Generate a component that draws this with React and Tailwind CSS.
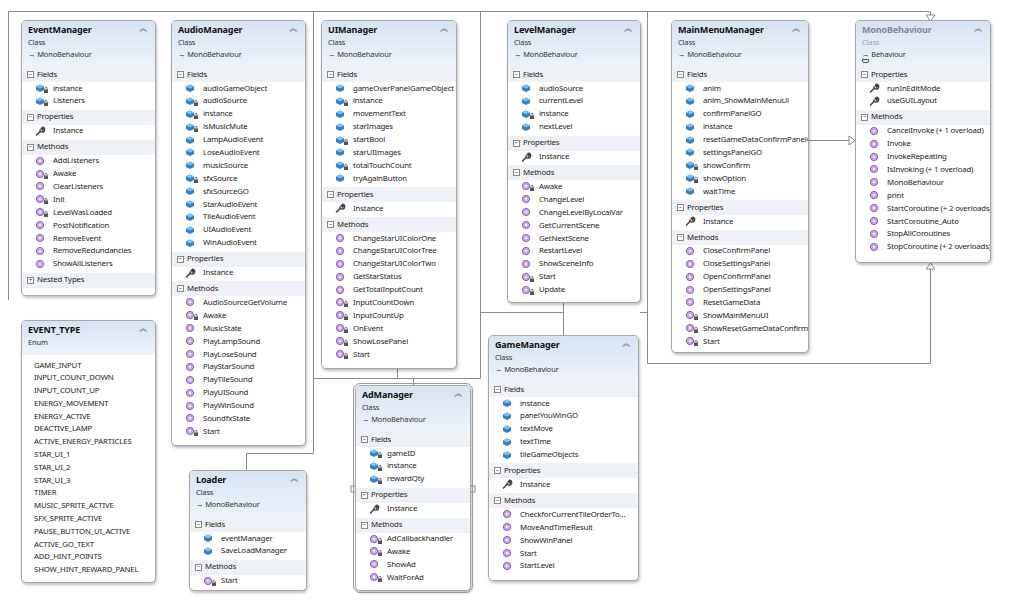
import React from 'react';

const F = 'f', FP = 'fp', P = 'p', M = 'm', MP = 'mp';

// diagram nodes: x, y, w, h and their sections
const boxes = [
  { name: 'EventManager', x: 21, y: 20, w: 135, h: 276, sub: 'Class', base: 'MonoBehaviour', nested: true,
    sections: [
      ['Fields', [[FP, 'instance'], [FP, 'Listeners']]],
      ['Properties', [[P, 'Instance']]],
      ['Methods', [[M, 'AddListeners'], [MP, 'Awake'], [M, 'ClearListeners'], [MP, 'Init'], [MP, 'LevelWasLoaded'], [M, 'PostNotification'], [M, 'RemoveEvent'], [M, 'RemoveRedundancies'], [M, 'ShowAllListeners']]],
    ] },
  { name: 'AudioManager', x: 171, y: 20, w: 135, h: 426, sub: 'Class', base: 'MonoBehaviour',
    sections: [
      ['Fields', [[F, 'audioGameObject'], [FP, 'audioSource'], [FP, 'instance'], [FP, 'isMusicMute'], [F, 'LampAudioEvent'], [F, 'LoseAudioEvent'], [F, 'musicSource'], [FP, 'sfxSource'], [F, 'sfxSourceGO'], [F, 'StarAudioEvent'], [F, 'TileAudioEvent'], [F, 'UIAudioEvent'], [F, 'WinAudioEvent']]],
      ['Properties', [[P, 'Instance']]],
      ['Methods', [[M, 'AudioSourceGetVolume'], [MP, 'Awake'], [M, 'MusicState'], [M, 'PlayLampSound'], [M, 'PlayLoseSound'], [M, 'PlayStarSound'], [M, 'PlayTileSound'], [M, 'PlayUISound'], [M, 'PlayWinSound'], [M, 'SoundfxState'], [MP, 'Start']]],
    ] },
  { name: 'UIManager', x: 321, y: 20, w: 136, h: 349, sub: 'Class', base: 'MonoBehaviour',
    sections: [
      ['Fields', [[F, 'gameOverPanelGameObject'], [FP, 'instance'], [F, 'movementText'], [F, 'starImages'], [FP, 'startBool'], [F, 'starUIImages'], [FP, 'totalTouchCount'], [F, 'tryAgainButton']]],
      ['Properties', [[P, 'Instance']]],
      ['Methods', [[M, 'ChangeStarUIColorOne'], [M, 'ChangeStarUIColorTree'], [M, 'ChangeStarUIColorTwo'], [M, 'GetStarStatus'], [M, 'GetTotalInputCount'], [MP, 'InputCountDown'], [MP, 'InputCountUp'], [MP, 'OnEvent'], [MP, 'ShowLosePanel'], [MP, 'Start']]],
    ] },
  { name: 'LevelManager', x: 507, y: 20, w: 134, h: 283, sub: 'Class', base: 'MonoBehaviour',
    sections: [
      ['Fields', [[F, 'audioSource'], [F, 'currentLevel'], [FP, 'instance'], [F, 'nextLevel']]],
      ['Properties', [[P, 'Instance']]],
      ['Methods', [[MP, 'Awake'], [M, 'ChangeLevel'], [M, 'ChangeLevelByLocalVar'], [M, 'GetCurrentScene'], [M, 'GetNextScene'], [M, 'RestartLevel'], [M, 'ShowSceneInfo'], [MP, 'Start'], [MP, 'Update']]],
    ] },
  { name: 'MainMenuManager', x: 671, y: 20, w: 138, h: 333, sub: 'Class', base: 'MonoBehaviour',
    sections: [
      ['Fields', [[F, 'anim'], [F, 'anim_ShowMainMenuUi'], [F, 'confirmPanelGO'], [F, 'instance'], [F, 'resetGameDataConfirmPanelGO'], [F, 'settingsPanelGO'], [FP, 'showConfirm'], [FP, 'showOption'], [F, 'waitTime']]],
      ['Properties', [[P, 'Instance']]],
      ['Methods', [[M, 'CloseConfirmPanel'], [M, 'CloseSettingsPanel'], [M, 'OpenConfirmPanel'], [M, 'OpenSettingsPanel'], [M, 'ResetGameData'], [MP, 'ShowMainMenuUI'], [MP, 'ShowResetGameDataConfirmPanel'], [MP, 'Start']]],
    ] },
  { name: 'MonoBehaviour', x: 855, y: 20, w: 136, h: 243, sub: 'Class', base: 'Behaviour', faded: true,
    sections: [
      ['Properties', [[P, 'runInEditMode'], [P, 'useGUILayout']]],
      ['Methods', [[M, 'CancelInvoke (+ 1 overload)'], [M, 'Invoke'], [M, 'InvokeRepeating'], [M, 'IsInvoking (+ 1 overload)'], [M, 'MonoBehaviour'], [M, 'print'], [M, 'StartCoroutine (+ 2 overloads)'], [M, 'StartCoroutine_Auto'], [M, 'StopAllCoroutines'], [M, 'StopCoroutine (+ 2 overloads)']]],
    ] },
  { name: 'EVENT_TYPE', x: 21, y: 320, w: 135, h: 263, sub: 'Enum', enumList: ['GAME_INPUT', 'INPUT_COUNT_DOWN', 'INPUT_COUNT_UP', 'ENERGY_MOVEMENT', 'ENERGY_ACTIVE', 'DEACTIVE_LAMP', 'ACTIVE_ENERGY_PARTICLES', 'STAR_UI_1', 'STAR_UI_2', 'STAR_UI_3', 'TIMER', 'MUSIC_SPRITE_ACTIVE', 'SFX_SPRITE_ACTIVE', 'PAUSE_BUTTON_UI_ACTIVE', 'ACTIVE_GO_TEXT', 'ADD_HINT_POINTS', 'SHOW_HINT_REWARD_PANEL'] },
  { name: 'Loader', x: 189, y: 470, w: 118, h: 121, sub: 'Class', base: 'MonoBehaviour',
    sections: [
      ['Fields', [[F, 'eventManager'], [F, 'SaveLoadManager']]],
      ['Methods', [[MP, 'Start']]],
    ] },
  { name: 'AdManager', x: 355, y: 385, w: 116, h: 206, sub: 'Class', base: 'MonoBehaviour', selected: true,
    sections: [
      ['Fields', [[FP, 'gameID'], [FP, 'instance'], [FP, 'rewardQty']]],
      ['Properties', [[P, 'Instance']]],
      ['Methods', [[MP, 'AdCallbackhandler'], [MP, 'Awake'], [M, 'ShowAd'], [MP, 'WaitForAd']]],
    ] },
  { name: 'GameManager', x: 488, y: 335, w: 151, h: 246, sub: 'Class', base: 'MonoBehaviour',
    sections: [
      ['Fields', [[F, 'instance'], [F, 'panelYouWinGO'], [F, 'textMove'], [F, 'textTime'], [F, 'tileGameObjects']]],
      ['Properties', [[P, 'Instance']]],
      ['Methods', [[M, 'CheckforCurrentTileOrderTo...'], [M, 'MoveAndTimeResult'], [M, 'ShowWinPanel'], [M, 'Start'], [M, 'StartLevel']]],
    ] },
];

function Icon({ kind }) {
  const lock = kind === FP || kind === MP;
  return (
    <svg width="14" height="11" viewBox="0 0 14 11" className="shrink-0">
      {(kind === F || kind === FP) && (
        <g>
          <path d="M1 3.5 L5 1.5 L9 3.5 L9 7 L5 9 L1 7 Z" fill="#2f7fc9" />
          <path d="M1 3.5 L5 5.5 L9 3.5 L5 1.5 Z" fill="#7fbfee" />
        </g>
      )}
      {(kind === M || kind === MP) && (
        <g>
          <circle cx="5" cy="5" r="3.6" fill="#c9a8e8" stroke="#8a5cc0" strokeWidth="1" />
          <circle cx="5" cy="5" r="1.3" fill="#f3eafc" />
        </g>
      )}
      {kind === P && (
        <path d="M1.5 9 L5.5 5 M5 4 a2.3 2.3 0 1 0 2.6 -2.6 L6.4 2.6 L7.6 3.8 L8.8 2.6" stroke="#444" strokeWidth="1.6" fill="none" strokeLinecap="round" />
      )}
      {lock && (
        <g>
          <rect x="9" y="6.5" width="4" height="3.5" fill="#555" />
          <path d="M9.8 6.6 V5.6 a1.2 1.2 0 0 1 2.4 0 V6.6" stroke="#555" strokeWidth="0.8" fill="none" />
        </g>
      )}
    </svg>
  );
}

function SectionHead({ label, plus }) {
  return (
    <div className="flex h-[15px] items-center gap-[3px] bg-[#eef1f6] pl-[5px] text-[#222]">
      <span className="flex h-[7px] w-[7px] items-center justify-center border border-[#888] bg-white text-[6px] leading-none">{plus ? '+' : '−'}</span>
      <span>{label}</span>
    </div>
  );
}

function Box({ b }) {
  return (
    <div
      className={`absolute flex flex-col overflow-hidden rounded-[5px] border border-[#a7a7a7] bg-white shadow-[1px_2px_3px_rgba(0,0,0,0.25)] ${b.selected ? 'outline outline-1 outline-offset-1 outline-[#9a9a9a]' : ''}`}
      style={{ left: b.x, top: b.y, width: b.w, height: b.h }}
    >
      <div className={`relative shrink-0 bg-gradient-to-b from-[#d7e2f2] to-[#eef3fa] px-[6px] pt-[3px] leading-[12px] ${b.enumList ? 'h-[34px]' : 'h-[46px]'}`}>
        <div className={`text-[9px] font-bold ${b.faded ? 'text-[#7d889a]' : 'text-[#111]'}`}>{b.name}</div>
        <div className={`text-[7.5px] ${b.faded ? 'text-[#9aa3b2]' : 'text-[#333]'}`}>{b.sub}</div>
        {b.base && <div className="text-[7.5px] text-[#333]">→ {b.base}</div>}
        {b.faded && <div className="absolute left-[6px] top-[38px] h-[4px] w-[7px] rounded-b-[2px] border border-[#555]" />}
        <span className="absolute right-[7px] top-[1px] text-[9px] text-[#666]">︽</span>
      </div>
      {b.enumList ? (
        <div className="pt-[4px]">
          {b.enumList.map((t) => (
            <div key={t} className="flex h-[12.8px] items-center pl-[12px] text-[#222]">{t}</div>
          ))}
        </div>
      ) : (
        <div className="flex flex-col">
          {b.sections.map(([label, items]) => (
            <div key={label} className="pb-[2px]">
              <SectionHead label={label} />
              {items.map(([k, t], i) => (
                <div key={i} className="flex h-[12.9px] items-center pl-[13px] text-[#222]">
                  <Icon kind={k} />
                  <span className="ml-[4px] whitespace-nowrap">{t}</span>
                </div>
              ))}
            </div>
          ))}
          {b.nested && <SectionHead label="Nested Types" plus />}
        </div>
      )}
    </div>
  );
}

export default function App() {
  const line = '#8c8c8c';
  return (
    <div className="relative h-[604px] w-[1024px] overflow-hidden bg-white text-[7.8px] leading-none tracking-[-0.15px]" style={{ fontFamily: '"Noto Sans", "Open Sans", sans-serif' }}>
      <svg className="absolute inset-0" width="1024" height="604">
        <g stroke={line} strokeWidth="1" fill="none">
          <path d="M8.5 11.5 H930.5 V16" />
          <path d="M8.5 11.5 V300" />
          <path d="M313.5 11.5 V453.5 H246.5 V470" />
          <path d="M313.5 378.5 H480.5" />
          <path d="M397.5 369 V378.5 M413.5 378.5 V385" />
          <path d="M480.5 11.5 V378.5" />
          <path d="M480.5 312.5 H563.5 M563.5 303 V335" />
          <path d="M647.5 11.5 V363.5 H930.5 V268" />
          <path d="M809 140.5 H850" />
          <path d="M640 312.5 H647.5" />
        </g>
        <path d="M926 15 L935 15 L930.5 21 Z" fill="white" stroke={line} />
        <path d="M926 269 L935 269 L930.5 263 Z" fill="white" stroke={line} />
        <path d="M849 136 L849 145 L855 140.5 Z" fill="white" stroke={line} />
        <rect x="351" y="486" width="5" height="6" fill="white" stroke={line} />
        <rect x="470" y="486" width="5" height="6" fill="white" stroke={line} />
      </svg>
      {boxes.map((b) => (
        <Box key={b.name} b={b} />
      ))}
    </div>
  );
}
